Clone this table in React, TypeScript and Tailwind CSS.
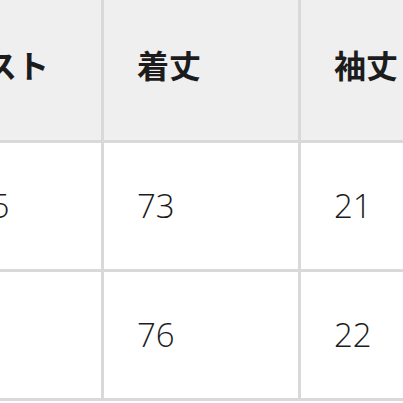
import React from "react";

const headers = ["バスト", "着丈", "袖丈", "肩幅"];
const rows = [
  ["105", "73", "21", "48"],
  ["", "76", "22", "50"],
];

const widths = ["w-[184px]", "w-[197px]", "w-[197px]", "w-[197px]"];

const App: React.FC = () => {
  return (
    <div className="w-[403px] h-[403px] overflow-hidden bg-white">
      <div className="ml-[-80px] mt-[-10px] flex flex-col">
        <div className="flex">
          {headers.map((h, i) => (
            <div
              key={h}
              className={`${widths[i]} shrink-0 h-[153px] pb-[3px] pl-[33px] flex items-center bg-[#efefef] border-r-[3px] border-b-[3px] border-[#d9d9d9] text-[32px] font-bold text-[#1c1c1c] font-['Noto_Sans_CJK_JP',sans-serif]`}
            >
              {h}
            </div>
          ))}
        </div>
        {rows.map((row, r) => (
          <div key={r} className="flex">
            {row.map((v, i) => (
              <div
                key={i}
                className={`${widths[i]} shrink-0 h-[129px] pl-[33px] flex items-center bg-white border-r-[3px] border-b-[3px] border-[#d9d9d9] text-[33px] font-light text-[#1c1c1c] font-['Open_Sans',sans-serif]`}
              >
                {v}
              </div>
            ))}
          </div>
        ))}
      </div>
    </div>
  );
};

export default App;
